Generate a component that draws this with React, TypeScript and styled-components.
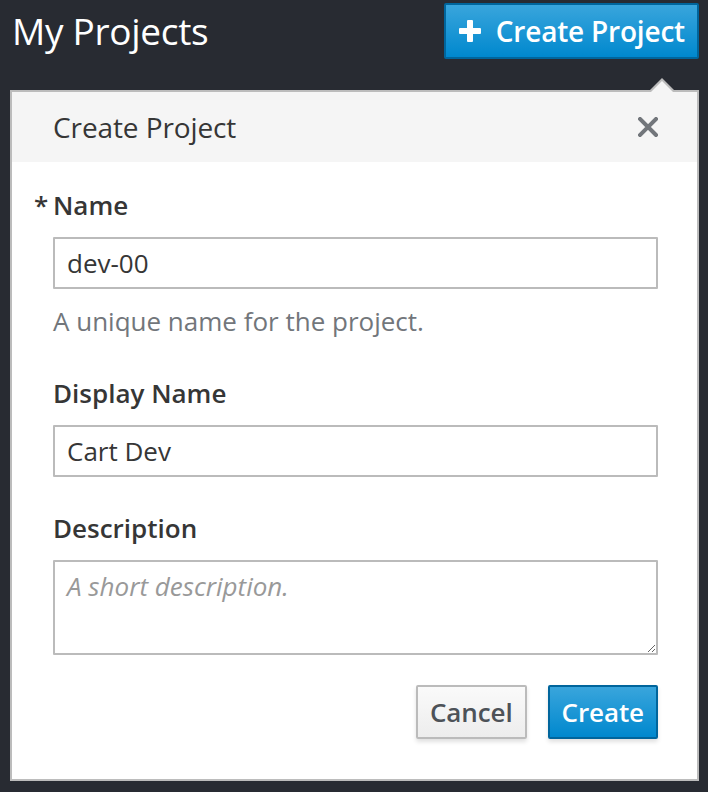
import React from "react";
import styled, { createGlobalStyle } from "styled-components";

const GlobalStyle = createGlobalStyle`
  html, body {
    margin: 0;
    padding: 0;
    background: #282b32;
  }
  body {
    font-family: "Open Sans", "Liberation Sans", sans-serif;
  }
`;

const Page = styled.div`
  width: 708px;
  height: 792px;
  padding: 3px 9px 0 10px;
  box-sizing: border-box;
  background: #282b32;
`;

const TopBar = styled.div`
  display: flex;
  justify-content: space-between;
  align-items: flex-start;
  height: 87px;
`;

const PageTitle = styled.h1`
  margin: 0 0 0 2px;
  font-size: 37px;
  font-weight: 400;
  line-height: 56px;
  color: #ffffff;
  letter-spacing: -0.3px;
`;

const Button = styled.button<{ $primary?: boolean; $big?: boolean }>`
  display: inline-flex;
  align-items: center;
  justify-content: center;
  gap: 15px;
  box-sizing: border-box;
  height: ${(p) => (p.$big ? "56px" : "54px")};
  padding: ${(p) => (p.$big ? "0 12px 0 13px" : "0 12px")};
  font-family: "Open Sans", "Liberation Sans", sans-serif;
  font-size: ${(p) => (p.$big ? "28px" : "26px")};
  font-weight: 600;
  letter-spacing: ${(p) => (p.$big ? "-0.2px" : "-0.1px")};
  border-radius: 2px;
  border: 2px solid ${(p) => (p.$primary ? "#00659c" : "#bbbbbb")};
  color: ${(p) => (p.$primary ? "#ffffff" : "#4d5258")};
  background: ${(p) =>
    p.$primary
      ? "linear-gradient(to bottom, #39a5dc 0%, #0088ce 100%)"
      : "linear-gradient(to bottom, #fafafa 0%, #ededed 100%)"};
  box-shadow: ${(p) => (p.$big ? "none" : "0 3px 4px rgba(3, 3, 3, 0.12)")};
  cursor: pointer;
`;

const Popover = styled.div`
  position: relative;
  border: 2px solid #bcbcbc;
  background: #ffffff;
  height: 691px;
  box-sizing: border-box;
`;

const Arrow = styled.div`
  position: absolute;
  top: -14px;
  right: 21px;
  width: 0;
  height: 0;
  border-left: 14px solid transparent;
  border-right: 14px solid transparent;
  border-bottom: 14px solid #bcbcbc;

  &::after {
    content: "";
    position: absolute;
    left: -12px;
    top: 3px;
    border-left: 12px solid transparent;
    border-right: 12px solid transparent;
    border-bottom: 12px solid #f5f5f5;
  }
`;

const PopoverHeader = styled.div`
  display: flex;
  align-items: center;
  justify-content: space-between;
  height: 70px;
  padding: 0 39px 0 41px;
  background: #f5f5f5;
`;

const PopoverTitle = styled.h3`
  margin: 0;
  font-size: 28px;
  font-weight: 400;
  color: #363636;
  letter-spacing: -0.1px;
`;

const CloseButton = styled.button`
  display: flex;
  align-items: center;
  justify-content: center;
  padding: 0;
  border: 0;
  background: none;
  color: #72767b;
  cursor: pointer;
`;

const PopoverBody = styled.form`
  padding: 27px 39px 0 41px;
  display: flex;
  flex-direction: column;
`;

const FormGroup = styled.div<{ $gap: number }>`
  display: flex;
  flex-direction: column;
  margin-bottom: ${(p) => p.$gap}px;
`;

const Label = styled.label<{ $required?: boolean }>`
  font-size: 26px;
  font-weight: 600;
  line-height: 32px;
  color: #363636;
  margin-bottom: 16px;

  &::before {
    content: ${(p) => (p.$required ? '"*"' : "none")};
    display: inline-block;
    width: 19px;
    margin-left: -19px;
  }
`;

const TextInput = styled.input`
  box-sizing: border-box;
  height: 52px;
  width: 100%;
  padding: 0 12px;
  border: 2px solid #bbbbbb;
  border-radius: 1px;
  font-family: "Open Sans", "Liberation Sans", sans-serif;
  font-size: 26px;
  color: #363636;
  background: #ffffff;
  outline: none;
`;

const TextArea = styled.textarea`
  box-sizing: border-box;
  height: 95px;
  width: 100%;
  padding: 6px 12px;
  border: 2px solid #bbbbbb;
  border-radius: 1px;
  font-family: "Open Sans", "Liberation Sans", sans-serif;
  font-size: 26px;
  color: #363636;
  background: #ffffff;
  outline: none;

  &::placeholder {
    color: #999999;
    font-style: italic;
  }
`;

const HelpText = styled.span`
  margin-top: 16px;
  font-size: 26px;
  line-height: 32px;
  color: #72767b;
`;

const Footer = styled.div`
  display: flex;
  justify-content: flex-end;
  gap: 21px;
`;

const PlusIcon = () => (
  <svg width="22" height="22" viewBox="0 0 22 22" fill="#ffffff">
    <rect x="8" y="0" width="6" height="22" rx="1" />
    <rect x="0" y="8" width="22" height="6" rx="1" />
  </svg>
);

const CloseIcon = () => (
  <svg width="20" height="20" viewBox="0 0 20 20">
    <path
      d="M2 2 L18 18 M18 2 L2 18"
      stroke="currentColor"
      strokeWidth="4"
      strokeLinecap="square"
    />
  </svg>
);

export default function App() {
  return (
    <>
      <GlobalStyle />
      <Page>
        <TopBar>
          <PageTitle>My Projects</PageTitle>
          <Button $primary $big>
            <PlusIcon />
            Create Project
          </Button>
        </TopBar>
        <Popover>
          <Arrow />
          <PopoverHeader>
            <PopoverTitle>Create Project</PopoverTitle>
            <CloseButton aria-label="Close">
              <CloseIcon />
            </CloseButton>
          </PopoverHeader>
          <PopoverBody onSubmit={(e) => e.preventDefault()}>
            <FormGroup $gap={40}>
              <Label $required>Name</Label>
              <TextInput defaultValue="dev-00" />
              <HelpText>A unique name for the project.</HelpText>
            </FormGroup>
            <FormGroup $gap={35}>
              <Label>Display Name</Label>
              <TextInput defaultValue="Cart Dev" />
            </FormGroup>
            <FormGroup $gap={30}>
              <Label>Description</Label>
              <TextArea placeholder="A short description." />
            </FormGroup>
            <Footer>
              <Button type="button">Cancel</Button>
              <Button type="submit" $primary>
                Create
              </Button>
            </Footer>
          </PopoverBody>
        </Popover>
      </Page>
    </>
  );
}
